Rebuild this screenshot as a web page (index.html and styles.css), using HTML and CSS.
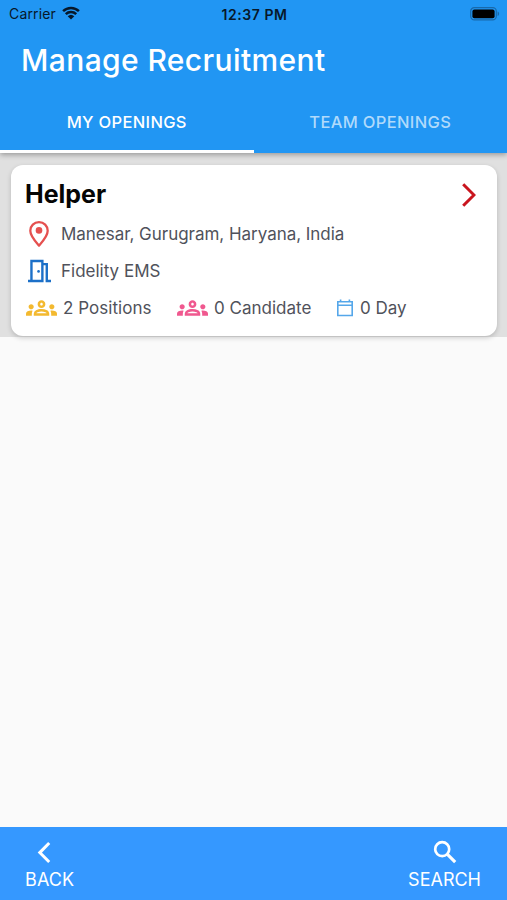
FILE: index.html
```html
<!DOCTYPE html>
<html lang="en">
<head>
  <meta charset="UTF-8" />
  <meta name="viewport" content="width=device-width, initial-scale=1.0"/>
  <title>Manage Recruitment</title>
  <link rel="stylesheet" href="styles.css">
</head>
<body>
  <svg width="0" height="0" class="defs">
    <symbol id="groups" viewBox="0 6 24 12">
      <path d="M4 13c1.1 0 2-.9 2-2s-.9-2-2-2-2 .9-2 2 .9 2 2 2zm1.13 1.1c-.37-.06-.74-.1-1.13-.1-.99 0-1.93.21-2.78.58A2.01 2.01 0 0 0 0 16.43V18h4.5v-1.61c0-.83.23-1.61.63-2.29zM20 13c1.1 0 2-.9 2-2s-.9-2-2-2-2 .9-2 2 .9 2 2 2zm4 3.43c0-.81-.48-1.53-1.22-1.85A6.95 6.95 0 0 0 20 14c-.39 0-.76.04-1.13.1.4.68.63 1.46.63 2.29V18H24v-1.57zm-7.76-2.78A9.96 9.96 0 0 0 12 12.75c-1.63 0-3.07.39-4.24.9A2.99 2.99 0 0 0 6 16.39V18h12v-1.61c0-1.18-.68-2.26-1.76-2.74zM8.07 16c.09-.23.13-.39.91-.69.97-.38 1.99-.56 3.02-.56s2.05.18 3.02.56c.77.3.81.46.91.69H8.07zM12 8c.55 0 1 .45 1 1s-.45 1-1 1-1-.45-1-1 .45-1 1-1m0-2c-1.66 0-3 1.34-3 3s1.34 3 3 3 3-1.34 3-3-1.34-3-3-3z"/>
    </symbol>
  </svg>

  <header>
    <div class="status-bar">
      <div class="carrier">
        <span>Carrier</span>
        <svg class="wifi" viewBox="0 0 18 14">
          <path d="M1.1 5.2a11.2 11.2 0 0 1 15.8 0M3.8 8.2a7.4 7.4 0 0 1 10.4 0" fill="none" stroke="#07182a" stroke-width="2.5"/>
          <path d="M9 13.6L5.7 10.2a4.8 4.8 0 0 1 6.6 0z" fill="#07182a"/>
        </svg>
      </div>
      <span class="time">12:37 PM</span>
      <svg class="battery" viewBox="0 0 30 14">
        <rect x=".7" y=".7" width="25.6" height="12.2" rx="3.6" fill="none" stroke="#1869ab" stroke-width="1.2"/>
        <rect x="2.4" y="2.4" width="22.2" height="8.8" rx="2" fill="#000"/>
        <path d="M27.6 4.6c2 .7 2 3.8 0 4.5z" fill="#1869ab"/>
      </svg>
    </div>
    <h1>Manage Recruitment</h1>
    <nav>
      <a href="#" class="tab active"><span>MY OPENINGS</span></a>
      <a href="#" class="tab"><span>TEAM OPENINGS</span></a>
    </nav>
  </header>

  <main>
    <div class="openings">
      <div class="card">
        <div class="card-title">
          <h2>Helper</h2>
          <svg class="arrow" viewBox="0 0 14 24">
            <path d="M1.2 1.2L12 12 1.2 22.8" fill="none" stroke="#c9151e" stroke-width="3"/>
          </svg>
        </div>
        <div class="row">
          <svg class="pin" viewBox="0 0 20 26">
            <path d="M10 1.2c-4.9 0-8.7 3.7-8.7 8.6 0 5.6 5.7 11.3 8.7 14.7 3-3.4 8.7-9.1 8.7-14.7 0-4.9-3.8-8.6-8.7-8.6z" fill="none" stroke="#e5504f" stroke-width="2.3"/>
            <circle cx="10" cy="9.4" r="3.3" fill="#e5504f"/>
          </svg>
          <span class="location">Manesar, Gurugram, Haryana, India</span>
        </div>
        <div class="row">
          <svg class="door" viewBox="0 0 24 24">
            <path d="M0 22.4h5M3.6 22.4V1.6h11.4V22.4H3.6M15 4.8h4.6v17.6H24" fill="none" stroke="#1c70c8" stroke-width="2.5"/>
            <circle cx="11" cy="12.4" r="1.4" fill="#1c70c8"/>
          </svg>
          <span class="company">Fidelity EMS</span>
        </div>
        <div class="stats">
          <div class="stat positions">
            <svg class="groups"><use href="#groups"/></svg>
            <span>2 Positions</span>
          </div>
          <div class="stat candidates">
            <svg class="groups"><use href="#groups"/></svg>
            <span>0 Candidate</span>
          </div>
          <div class="stat days">
            <svg class="calendar" viewBox="0 0 16 18">
              <path d="M.8 2.7h14.4v13.8H.8zM.8 6.3h14.4M3.6.4v2.4M12.4.4v2.4" fill="none" stroke="#55a7ea" stroke-width="1.6"/>
            </svg>
            <span>0 Day</span>
          </div>
        </div>
      </div>
    </div>
  </main>

  <footer>
    <a href="#" class="action back">
      <svg viewBox="0 0 24 24">
        <path d="M17.2 3L7.8 12.6l9.4 9.4" fill="none" stroke="#fff" stroke-width="3"/>
      </svg>
      <span>BACK</span>
    </a>
    <a href="#" class="action search">
      <svg viewBox="0 0 24 24">
        <circle cx="9.2" cy="9.2" r="7" fill="none" stroke="#fff" stroke-width="2.7"/>
        <path d="M14.2 14.2l8 8" fill="none" stroke="#fff" stroke-width="3.2"/>
      </svg>
      <span>SEARCH</span>
    </a>
  </footer>
</body>
</html>
```
FILE: styles.css
```css
* {
  box-sizing: border-box;
}

body {
  font-family: Inter, "Liberation Sans", sans-serif;
  margin: 0;
  height: 900px;
  display: flex;
  flex-direction: column;
  background: #fafafa;
  overflow: hidden;
}

svg {
  display: block;
  flex-shrink: 0;
}

.defs {
  position: absolute;
}

a {
  color: white;
  text-decoration: none;
}

span, h1, h2 {
  white-space: nowrap;
}

header {
  background: #2196f3;
  color: white;
  height: 153px;
  box-shadow: 0 2px 5px rgba(0,0,0,0.3);
  z-index: 1;
}

.status-bar {
  display: grid;
  grid-template-columns: 1fr auto 1fr;
  align-items: center;
  height: 28px;
  padding: 0 7px 0 9px;
  color: #07182a;
  font-size: 14px;
}

.carrier {
  display: flex;
  align-items: center;
  gap: 6px;
  letter-spacing: 0.15px;
  margin-top: -1px;
}

.wifi {
  width: 18px;
  height: 14px;
  margin-top: -2px;
}

.time {
  font-size: 14px;
  font-weight: 600;
  letter-spacing: 0.55px;
}

.battery {
  width: 30px;
  height: 14px;
  justify-self: end;
}

h1 {
  margin: 0;
  padding-left: 21px;
  height: 64px;
  line-height: 64px;
  font-size: 30px;
  font-weight: 500;
  letter-spacing: 0.39px;
}

nav {
  display: flex;
  height: 61px;
}

.tab {
  flex: 1;
  padding-top: 1px;
  line-height: 58px;
  text-align: center;
  font-size: 16.5px;
  font-weight: 500;
  letter-spacing: 0.33px;
  color: #b0dafb;
  border-bottom: 3px solid transparent;
}

.tab.active {
  color: white;
  border-bottom-color: white;
}

main {
  flex: 1;
}

.openings {
  background: #e0e0e0;
  height: 184px;
  padding: 12px 10px 0 11px;
}

.card {
  background: white;
  height: 171px;
  border-radius: 12px;
  box-shadow: 0 2px 5px rgba(0,0,0,0.18);
  padding: 10px 21px 0 14px;
}

.card-title {
  display: flex;
  justify-content: space-between;
  align-items: center;
  height: 40px;
}

h2 {
  margin: -2px 0 0;
  color: #050505;
  font-size: 25px;
  font-weight: 700;
}

.arrow {
  width: 14px;
  height: 24px;
}

.row {
  display: flex;
  align-items: center;
  height: 37px;
  color: #50525b;
  font-size: 17px;
}

.row span {
  margin-top: 1px;
}

.location {
  letter-spacing: -0.03px;
}

.pin {
  width: 20px;
  height: 26px;
  margin: 0 12px 0 4px;
}

.door {
  width: 23px;
  height: 24px;
  margin: 0 10px 0 3px;
}

.stats {
  display: flex;
  align-items: center;
  height: 37px;
  padding-left: 1px;
  color: #50525b;
  font-size: 17px;
}

.stat {
  display: flex;
  align-items: center;
  gap: 6px;
}

.groups {
  width: 31px;
  height: 16px;
}

.positions {
  width: 151px;
  letter-spacing: 0.05px;
}

.positions .groups {
  fill: #f3b92f;
}

.candidates {
  width: 160px;
}

.candidates .groups {
  fill: #f0588f;
}

.calendar {
  width: 16px;
  height: 18px;
}

.days {
  gap: 7px;
}

footer {
  display: flex;
  justify-content: space-between;
  background: #3598ff;
  height: 73px;
  padding: 13px 26px 0 25px;
}

.action {
  display: flex;
  flex-direction: column;
  align-items: center;
  gap: 3px;
  font-size: 18px;
  line-height: 25px;
}

.action svg {
  width: 24px;
  height: 24px;
}

.back {
  letter-spacing: 0.1px;
}

.back svg {
  margin-right: 12px;
}
```
